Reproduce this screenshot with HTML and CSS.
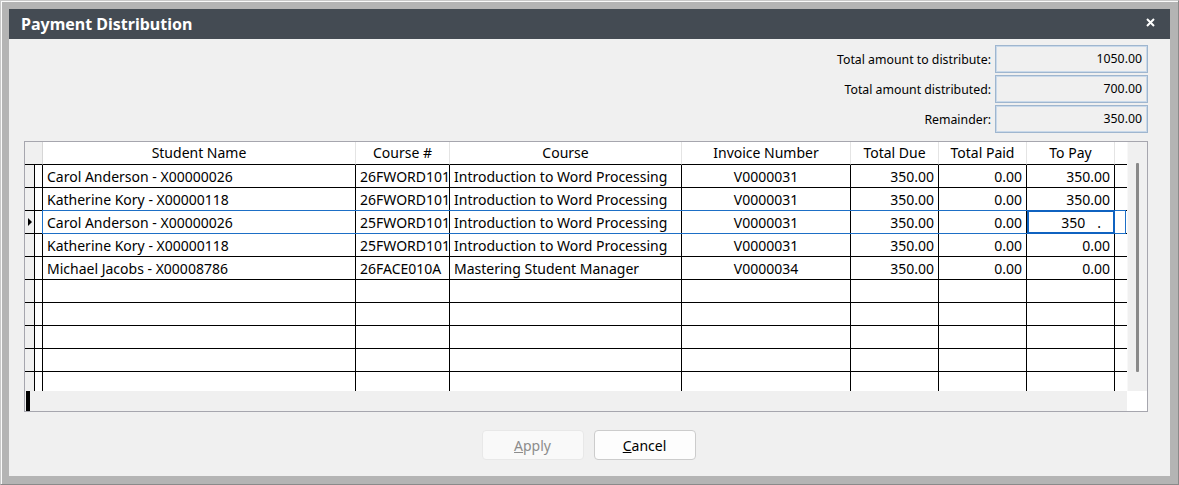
FILE: index.html
```html
<!DOCTYPE html>
<html lang="en">
<head>
    <meta charset="UTF-8">
    <title>Payment Distribution</title>
    <link rel="stylesheet" href="styles.css">
</head>
<body>
    <div class="window">
        <div class="dialog">
            <div class="titlebar">
                <span class="title">Payment Distribution</span>
                <svg class="close" width="9" height="9" viewBox="0 0 9 9">
                    <path d="M1 1 L8 8 M8 1 L1 8" stroke="#ffffff" stroke-width="2" fill="none"/>
                </svg>
            </div>

            <div class="content">
                <div class="totals">
                    <div class="total-row">
                        <span class="total-label">Total amount to distribute:</span>
                        <span class="total-box">1050.00</span>
                    </div>
                    <div class="total-row">
                        <span class="total-label">Total amount distributed:</span>
                        <span class="total-box">700.00</span>
                    </div>
                    <div class="total-row">
                        <span class="total-label">Remainder:</span>
                        <span class="total-box">350.00</span>
                    </div>
                </div>

                <div class="grid">
                    <div class="grid-main">
                        <div class="grid-rows">
                            <div class="row head">
                                <div class="cell corner"></div>
                                <div class="cell">Student Name</div>
                                <div class="cell">Course #</div>
                                <div class="cell">Course</div>
                                <div class="cell">Invoice Number</div>
                                <div class="cell">Total Due</div>
                                <div class="cell">Total Paid</div>
                                <div class="cell">To Pay</div>
                                <div class="cell filler"></div>
                            </div>

                            <div class="row">
                                <div class="cell rh"></div><div class="cell gap"></div>
                                <div class="cell">Carol Anderson - X00000026</div>
                                <div class="cell">26FWORD101</div>
                                <div class="cell">Introduction to Word Processing</div>
                                <div class="cell mid">V0000031</div>
                                <div class="cell num">350.00</div>
                                <div class="cell num">0.00</div>
                                <div class="cell num">350.00</div>
                                <div class="cell filler"></div>
                            </div>
                            <div class="row">
                                <div class="cell rh"></div><div class="cell gap"></div>
                                <div class="cell">Katherine Kory - X00000118</div>
                                <div class="cell">26FWORD101</div>
                                <div class="cell">Introduction to Word Processing</div>
                                <div class="cell mid">V0000031</div>
                                <div class="cell num">350.00</div>
                                <div class="cell num">0.00</div>
                                <div class="cell num">350.00</div>
                                <div class="cell filler"></div>
                            </div>
                            <div class="row current">
                                <div class="cell rh"><span class="marker"></span></div><div class="cell gap"></div>
                                <div class="cell">Carol Anderson - X00000026</div>
                                <div class="cell">25FWORD101</div>
                                <div class="cell">Introduction to Word Processing</div>
                                <div class="cell mid">V0000031</div>
                                <div class="cell num">350.00</div>
                                <div class="cell num">0.00</div>
                                <div class="cell num editing"><span class="editor">350<span class="dot">.</span></span></div>
                                <div class="cell filler"></div>
                            </div>
                            <div class="row">
                                <div class="cell rh"></div><div class="cell gap"></div>
                                <div class="cell">Katherine Kory - X00000118</div>
                                <div class="cell">25FWORD101</div>
                                <div class="cell">Introduction to Word Processing</div>
                                <div class="cell mid">V0000031</div>
                                <div class="cell num">350.00</div>
                                <div class="cell num">0.00</div>
                                <div class="cell num">0.00</div>
                                <div class="cell filler"></div>
                            </div>
                            <div class="row">
                                <div class="cell rh"></div><div class="cell gap"></div>
                                <div class="cell">Michael Jacobs - X00008786</div>
                                <div class="cell">26FACE010A</div>
                                <div class="cell">Mastering Student Manager</div>
                                <div class="cell mid">V0000034</div>
                                <div class="cell num">350.00</div>
                                <div class="cell num">0.00</div>
                                <div class="cell num">0.00</div>
                                <div class="cell filler"></div>
                            </div>

                            <!-- empty rows -->
                            <div class="row">
                                <div class="cell rh"></div><div class="cell gap"></div>
                                <div class="cell"></div><div class="cell"></div><div class="cell"></div><div class="cell"></div>
                                <div class="cell"></div><div class="cell"></div><div class="cell"></div><div class="cell filler"></div>
                            </div>
                            <div class="row">
                                <div class="cell rh"></div><div class="cell gap"></div>
                                <div class="cell"></div><div class="cell"></div><div class="cell"></div><div class="cell"></div>
                                <div class="cell"></div><div class="cell"></div><div class="cell"></div><div class="cell filler"></div>
                            </div>
                            <div class="row">
                                <div class="cell rh"></div><div class="cell gap"></div>
                                <div class="cell"></div><div class="cell"></div><div class="cell"></div><div class="cell"></div>
                                <div class="cell"></div><div class="cell"></div><div class="cell"></div><div class="cell filler"></div>
                            </div>
                            <div class="row">
                                <div class="cell rh"></div><div class="cell gap"></div>
                                <div class="cell"></div><div class="cell"></div><div class="cell"></div><div class="cell"></div>
                                <div class="cell"></div><div class="cell"></div><div class="cell"></div><div class="cell filler"></div>
                            </div>
                            <div class="row">
                                <div class="cell rh"></div><div class="cell gap"></div>
                                <div class="cell"></div><div class="cell"></div><div class="cell"></div><div class="cell"></div>
                                <div class="cell"></div><div class="cell"></div><div class="cell"></div><div class="cell filler"></div>
                            </div>
                        </div>
                        <div class="hscroll"><span class="hthumb"></span></div>
                    </div>
                    <div class="vscroll">
                        <div class="vtrack"><span class="vthumb"></span></div>
                        <div class="scroll-corner"></div>
                    </div>
                </div>

                <div class="buttons">
                    <button class="btn" disabled><u>A</u>pply</button>
                    <button class="btn"><u>C</u>ancel</button>
                </div>
            </div>
        </div>
    </div>
</body>
</html>
```

FILE: styles.css
```css
body {
    margin: 0;
    font-family: "Noto Sans", "DejaVu Sans", sans-serif;
}

.window {
    width: 1179px;
    height: 485px;
    box-sizing: border-box;
    padding: 8px;
    background-color: #b4b4b4;
    border: 1px solid;
    border-color: #c8c8c8 #8a8a8a #8a8a8a #c8c8c8;
    box-shadow: inset 1px 1px 0 #fafafa;
    display: flex;
}

.dialog {
    flex: 1;
    display: flex;
    flex-direction: column;
    background-color: #f0f0f0;
}

.titlebar {
    height: 30px;
    flex: none;
    background-color: #444b53;
    display: flex;
    align-items: center;
    justify-content: space-between;
    padding: 0 15px 0 12px;
}

.title {
    color: #ffffff;
    font-size: 16px;
    font-weight: bold;
    line-height: 30px;
}

.close {
    margin-top: -4px;
}

.content {
    flex: 1;
    display: flex;
    flex-direction: column;
    padding: 6px 22px 0 15px;
}

/* totals on the top right */
.totals {
    display: flex;
    flex-direction: column;
    align-items: flex-end;
    gap: 2px;
}

.total-row {
    display: flex;
    align-items: center;
    gap: 4px;
    font-size: 12.3px;
    color: #000000;
}

.total-box {
    width: 153px;
    height: 28px;
    box-sizing: border-box;
    border: 1px solid #9fb6cf;
    box-shadow: inset 0 0 0 1px #c9d9ea;
    background-color: #f0f0f0;
    text-align: right;
    line-height: 26px;
    padding-right: 5px;
}

/* data grid */
.grid {
    margin-top: 8px;
    height: 271px;
    box-sizing: border-box;
    border: 1px solid #a6a6ae;
    display: flex;
}

.grid-main {
    width: 1102px;
    display: flex;
    flex-direction: column;
}

.grid-rows {
    height: 249px;
    overflow: hidden;
    background-color: #ffffff;
}

.row {
    display: grid;
    grid-template-columns: 10px 8px 313px 94px 232px 169px 88px 88px 88px 12px;
    height: 23px;
    font-size: 14px;
    color: #000000;
}

.cell {
    box-sizing: border-box;
    border-right: 1px solid #000000;
    border-bottom: 1px solid #000000;
    padding: 0 4px;
    line-height: 23px;
    white-space: nowrap;
    overflow: hidden;
}

.cell.rh {
    background-color: #f0f0f0;
    padding: 0;
    display: flex;
    align-items: center;
    justify-content: center;
}

.cell.gap {
    padding: 0;
}

.cell.filler {
    border-right: none;
    padding: 0;
}

.cell.num {
    text-align: right;
}

.cell.mid {
    text-align: center;
}

.head .cell {
    text-align: center;
    line-height: 22px;
    border-right-color: #e4e4e4;
}

.head .cell.corner {
    grid-column: span 2;
    background-color: #f0f0f0;
    border-right-color: #d6d6d6;
}

.marker {
    width: 0;
    height: 0;
    border-left: 4px solid #000000;
    border-top: 4px solid transparent;
    border-bottom: 4px solid transparent;
    margin-left: 1px;
}

/* current row frame */
.row.current {
    position: relative;
}

.row.current::after {
    content: "";
    position: absolute;
    top: -1px;
    left: 17px;
    width: 1084px;
    height: 24px;
    box-sizing: border-box;
    border: 1px solid #1d6fc6;
}

.cell.editing {
    position: relative;
    overflow: visible;
}

.editor {
    position: absolute;
    top: -1px;
    bottom: -1px;
    left: 0;
    right: -1px;
    z-index: 1;
    box-sizing: border-box;
    border: 2px solid #0f62c0;
    background-color: #ffffff;
    line-height: 21px;
    text-align: right;
    padding-right: 12px;
}

.dot {
    margin-left: 12px;
}

.hscroll {
    height: 20px;
    background-color: #f0f0f0;
    display: flex;
}

.hthumb {
    width: 4px;
    margin-left: 1px;
    background-color: #000000;
}

.vscroll {
    width: 20px;
    display: flex;
    flex-direction: column;
}

.vtrack {
    height: 249px;
    box-sizing: border-box;
    background-color: #f0f0f0;
    border-left: 1px solid #f8f8f8;
    padding-top: 21px;
    display: flex;
    justify-content: center;
}

.vthumb {
    width: 3px;
    height: 209px;
    background-color: #8a8a8a;
    border-radius: 1px;
}

.scroll-corner {
    height: 20px;
    background-color: #ffffff;
}

/* buttons */
.buttons {
    margin-top: 18px;
    padding-left: 5px;
    display: flex;
    justify-content: center;
    gap: 10px;
}

.btn {
    width: 102px;
    height: 30px;
    font-family: "Noto Sans", "DejaVu Sans", sans-serif;
    font-size: 14px;
    color: #000000;
    background-color: #fdfdfd;
    border: 1px solid #cccccc;
    border-radius: 4px;
    padding: 0;
}

.btn:disabled {
    color: #8c8c8c;
    background-color: #f9f9f9;
    border-color: #e8e8e8;
}
```
